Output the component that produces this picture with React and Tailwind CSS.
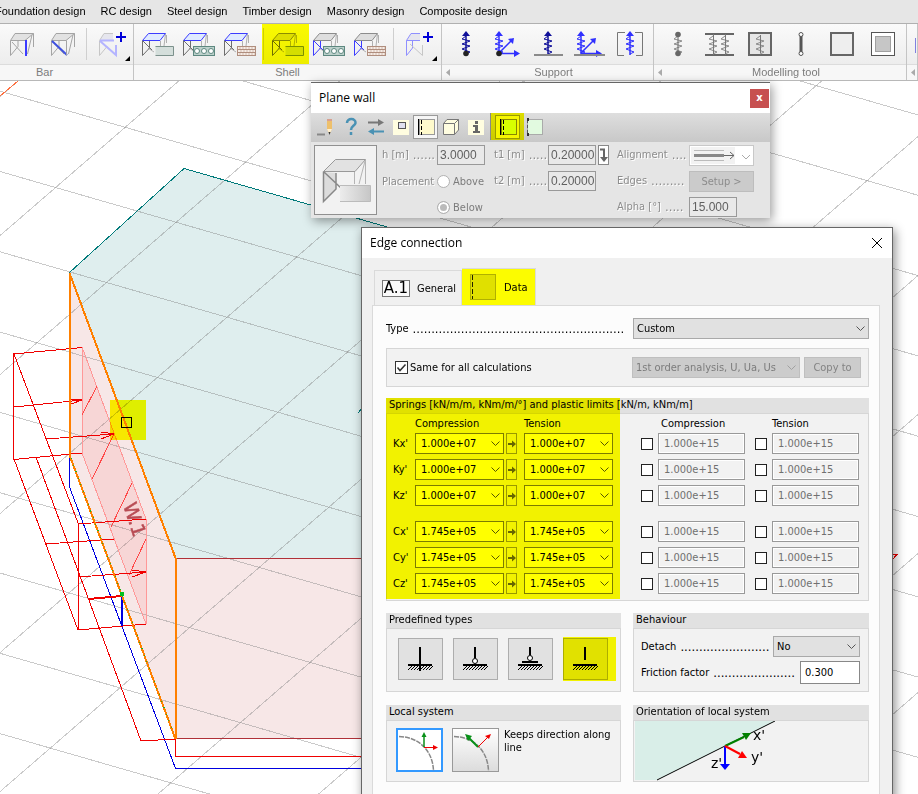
import { useState } from "react";

const ICON = { width: 40, height: 36, viewBox: "0 0 40 36", fill: "none" };

/* Yellow marker laid over a control */
function Marker({ className = "inset-0" }) {
  return <span className={`absolute ${className} bg-[#ffff00] mix-blend-multiply pointer-events-none`} />;
}

/* ---------- ribbon icons ---------- */

function BarIcon({ diagonal }) {
  return (
    <svg {...ICON} aria-hidden="true">
      <path d="M8.500 14.500L13 7.500H31.500L23 14.500Z" fill="#e2e2e2" />
      <path d="M8.500 29.500V14.500L13 7.500H31.500L23 14.500H8.500M8.500 29.500L16 20.500V14.500M10 16L21 28M31.500 7.500V21M30 9L25.500 28" stroke="#a4a4a4" />
      {diagonal ? (
        <path d="M9 15L24 29" stroke="#3f51e0" strokeWidth="2" />
      ) : (
        <path d="M24 14V30" stroke="#3c3cff" strokeWidth="2" />
      )}
      {diagonal && <path d="M23.500 14.500V29.500" stroke="#a4a4a4" />}
    </svg>
  );
}

function AddIcon({ shell }) {
  return (
    <svg {...ICON} aria-hidden="true">
      <path d="M8.500 14.500L13 7.500H22V14.500Z" fill="#e6e6ee" />
      {shell ? (
        <>
          <path d="M8.500 29.500V14.500L13 7.500H22M8.500 14.500H22M8.500 29.500L14.500 22V15" stroke="#8f8fff" />
          <path d="M12 18L24.500 29.500V19" stroke="#c6c6c6" />
        </>
      ) : (
        <>
          <path d="M8.500 29.500V14.500L13 7.500H22M8.500 29.500L16 20.500" stroke="#c6c6c6" />
          <path d="M9 14.500H23M9 15L25 29V19" stroke="#b4b4ff" strokeWidth="2" />
        </>
      )}
      <path d="M25 11H35M30 6V16" stroke="#0000d8" strokeWidth="2" />
      <path d="M39 30V35H34Z" fill="#000" />
    </svg>
  );
}

function ShellIcon({ wall, slab }) {
  const roof = wall ? "#8c8c8c" : "#3c3cff";
  const side = wall === "blue" ? "#3c3cff" : "#6e6e6e";
  return (
    <svg {...ICON} aria-hidden="true">
      <path d="M4.500 14.500L10.500 7.500H27.500L22 14.500Z" fill={wall ? "#dedede" : "#dfeaff"} stroke={roof} />
      <path d="M22.500 15V20M27.500 8L26 20M28.500 9V17M10 22L16 26" stroke="#b0b0b0" />
      <path d="M4.500 14.500V29.500L11.500 22V15M5 15L14 24" stroke={side} />
      {slab === "plain" && <path d="M17.500 20.500H35.500V29.500H17.500" fill="#d4dedb" stroke="#7c918c" />}
      {slab === "holes" && (
        <g stroke="#5d8880">
          <rect x="14.500" y="20.500" width="21" height="9" fill="#bcd0cb" />
          <circle cx="18" cy="25" r="2.500" fill="#fff" />
          <circle cx="25" cy="25" r="2.500" fill="#fff" />
          <circle cx="32" cy="25" r="2.500" fill="#fff" />
        </g>
      )}
      {slab === "brick" && (
        <g stroke="#b08e7e">
          <rect x="17.500" y="20.500" width="18" height="9" fill="#f6ece6" />
          <path d="M18 23.500H35M18 26.500H35" />
          <path d="M19 22H35M20 25H35M19 28H35" strokeDasharray="2 1" strokeOpacity="0.5" />
        </g>
      )}
    </svg>
  );
}

const SPRING = "M20 10L16 13L24 15L16 18L24 20L16 23L24 26L20 28";

function SupportIcon({ ground, axes, bracket }) {
  const color = axes || bracket ? "#3030ff" : "#10109a";
  return (
    <svg {...ICON} aria-hidden="true">
      {bracket && <path d="M15 6.500H7.500V29.500H14M25 6.500H32.500V29.500H26" stroke="#777" />}
      <g transform={`translate(${axes ? -8 : 0})`}>
        <path d={SPRING} stroke={color} />
        <path d="M20 8V29" stroke={color} strokeWidth="1.500" />
        <path d="M20 5L24 10H16Z" fill={color} />
      </g>
      {axes && (
        <>
          <path d="M12 27L25 14M12 27.500H31" stroke={color} strokeWidth="1.500" />
          <path d="M27 12L26 18L21 13ZM33 27.500L27 24V31Z" fill={color} />
        </>
      )}
      {ground ? (
        <path d={axes ? "M5 29H36" : "M6 29H35"} stroke="#8a8a8a" strokeWidth="2" />
      ) : (
        !bracket && <circle cx={axes ? 12 : 20} cy="27.500" r="2.800" fill="#222" />
      )}
    </svg>
  );
}

function ModelIcon({ kind }) {
  return (
    <svg {...ICON} aria-hidden="true">
      {kind === "point" && (
        <>
          <path d={SPRING} stroke="#8c8c8c" />
          <path d="M20 8V28" stroke="#666" />
          <circle cx="20" cy="8.500" r="2.800" fill="#666" />
          <circle cx="20" cy="27.500" r="2.800" fill="#666" />
        </>
      )}
      {kind === "line" && (
        <>
          <path d="M6 8H35M6 29H35" stroke="#666" strokeWidth="2" />
          <g stroke="#8c8c8c">
            <path d={SPRING} transform="translate(-6)" />
            <path d={SPRING} transform="translate(6)" />
            <path d="M14.500 8V29M26.500 8V29" stroke="#777" />
          </g>
        </>
      )}
      {kind === "surface" && (
        <>
          <rect x="9" y="7" width="22" height="22" fill="#e6e6e6" stroke="#666" strokeWidth="2" />
          <path d={SPRING} stroke="#8c8c8c" />
          <path d="M20.500 9V27" stroke="#777" />
        </>
      )}
      {kind === "bar" && (
        <>
          <path d="M20 9V27" stroke="#555" strokeWidth="3" />
          <circle cx="20" cy="8.500" r="2" fill="#fff" stroke="#555" />
          <circle cx="20" cy="27.500" r="2" fill="#fff" stroke="#555" />
        </>
      )}
      {kind === "frame" && <rect x="9" y="7" width="22" height="22" fill="#eee" stroke="#666" strokeWidth="2" />}
      {kind === "cover" && (
        <>
          <rect x="8.500" y="6.500" width="23" height="23" fill="#fff" stroke="#555" />
          <rect x="12.500" y="10.500" width="15" height="15" fill="#c6c6c6" stroke="#a0a0a0" />
        </>
      )}
    </svg>
  );
}

/* ---------- ribbon ---------- */

function Tool({ label, children }) {
  return (
    <button aria-label={label} className="w-[41px] h-10 shrink-0 flex items-center justify-center">
      {children}
    </button>
  );
}

function Divider() {
  return <span className="w-px h-8 mx-[3px] shrink-0 bg-[#cfcfcf]" />;
}

function Group({ title, arrow, className, inner = "pl-[3px]", caption = "", children }) {
  return (
    <section className={`flex flex-col border-r border-[#c4c4c4] ${className}`}>
      <div className={`h-10 flex items-center overflow-hidden bg-gradient-to-b from-[#fafafa] to-[#ededed] ${inner}`}>{children}</div>
      <div className={`h-4 flex items-center border-t border-[#dcdcdc] bg-[#f7f7f7] text-[11px] text-[#7c7c7c] ${caption}`}>
        {arrow && (
          <svg width="12" height="9" aria-hidden="true"><path d="M8 1V8L4 4.500Z" fill="#aaa" /></svg>
        )}
        <span className="flex-1 text-center">{title}</span>
      </div>
    </section>
  );
}

function Ribbon() {
  const menus = ["RC design", "Steel design", "Timber design", "Masonry design", "Composite design"];
  return (
    <header className="relative font-['Liberation_Sans',sans-serif]">
      <nav className="h-6 flex items-center gap-[15px] bg-[#e6e6e6] border-b border-[#b0b0b0] text-[11px] whitespace-nowrap text-black">
        <button className="-ml-[5px]">Foundation design</button>
        {menus.map((m) => (
          <button key={m}>{m}</button>
        ))}
      </nav>
      <div className="flex border-b border-[#b8b8b8]">
        <Group title="Bar" className="w-[134px] shrink-0" inner="pl-px" caption="pr-11">
          <Tool label="Column"><BarIcon /></Tool>
          <Tool label="Brace"><BarIcon diagonal /></Tool>
          <Divider />
          <Tool label="More bars"><AddIcon /></Tool>
        </Group>
        <Group title="Shell" className="w-[308px] shrink-0">
          <Tool label="Plane plate"><ShellIcon slab="plain" /></Tool>
          <Tool label="Profiled plate"><ShellIcon slab="holes" /></Tool>
          <Tool label="Timber plate"><ShellIcon slab="brick" /></Tool>
          <div className="relative flex items-center">
            <Divider />
            <Tool label="Plane wall"><ShellIcon wall="gray" slab="plain" /></Tool>
            <Marker className="inset-y-0 left-0.5 -right-px" />
          </div>
          <Tool label="Profiled wall"><ShellIcon wall="blue" slab="holes" /></Tool>
          <Tool label="Timber wall"><ShellIcon wall="blue" slab="brick" /></Tool>
          <Divider />
          <Tool label="More shells"><AddIcon shell /></Tool>
        </Group>
        <Group title="Support" arrow className="w-[212px] shrink-0">
          <Tool label="Point support"><SupportIcon /></Tool>
          <Tool label="Point support group"><SupportIcon axes /></Tool>
          <Tool label="Line support"><SupportIcon ground /></Tool>
          <Tool label="Line support group"><SupportIcon ground axes /></Tool>
          <Tool label="Surface support"><SupportIcon bracket /></Tool>
        </Group>
        <Group title="Modelling tool" arrow className="w-[253px] shrink-0">
          {["point", "line", "surface", "bar", "frame", "cover"].map((k) => (
            <Tool key={k} label={k}><ModelIcon kind={k} /></Tool>
          ))}
        </Group>
        <Group arrow className="flex-1 min-w-0" inner="pl-2">
          <svg width="4" height="18" aria-hidden="true"><path d="M0.500 18V3M2 0.500H4" stroke="#8080e0" /></svg>
        </Group>
      </div>
    </header>
  );
}

/* ---------- 3D view ---------- */

function Scene() {
  const falling = Array.from({ length: 14 }, (_, k) => -230 + k * 80.3);
  const rising = Array.from({ length: 13 }, (_, k) => 96.6 + k * 139);
  return (
    <svg className="absolute inset-0 w-full h-full" aria-label="Model view" fill="none" shapeRendering="crispEdges">
      <path d="M69 273L184 168L700 317L700 558H175Z" fill="#dfeeee" />
      <path d="M69 273L175 558V739L69 455Z" fill="#f7e7e7" />
      <path d="M175 558H700V739H175Z" fill="#f7e7e7" />
      <g stroke="#808080" strokeOpacity="0.42">
        {falling.map((y) => <path key={y} d={`M0 ${y}l1200 346`} />)}
        {rising.map((y) => <path key={y} d={`M0 ${y}l1200 -1038`} />)}
      </g>
      <path d="M0 96L18 81" stroke="#ff7040" />
      <path d="M69 273L184 168.500L700 317M358 413L363 407" stroke="#007a7a" />
      <path d="M175 558.500H700M175 738.500H700" stroke="#b03038" />
      <path d="M69.500 455V487L175.500 768.500H700" stroke="#0000e0" />
      <path d="M122 597V626" stroke="#0000e0" strokeWidth="2" />
      <path d="M82 347L146 519V624L82 453Z" fill="#ff3030" fillOpacity="0.09" stroke="#ff9898" />
      <path d="M97 386L82 415M114 434L92 479M132 483L111 527M146 539L129 575" stroke="#ff4848" />
      <g stroke="#f00000">
        <path d="M82 347.500L13.500 354V459.500L82 453M14 354L78 523V630L146 624M14 459L78 630M36 457L141 741L175 739M78 524L146 519" />
        <path d="M14 407L82 400M46 439L114 434M46 544L114 539M78 577L146 572M175.500 739V756.500H700" />
        <path d="M82 400l-11 -1M82 400l-11 4M114 434l-13 -2M114 434l-13 5M114 539l-12 0.500M146 572l-14 -2M146 572l-14 5" />
        <path d="M88 599L122 596" strokeWidth="2" />
        <path d="M890 554.500H897L891 561" />
      </g>
      <path d="M69.500 273V455L175.500 739V558L69.500 273" stroke="#ff8000" strokeWidth="2" />
      <path d="M71 458L175 737" stroke="#20b020" strokeDasharray="1 6" />
      <path d="M120 592h4v4h-4z" fill="#00c020" />
      <text x="123" y="505" transform="rotate(72 123 505)" fill="#b84c54" stroke="#b84c54" strokeWidth="0.500" fontSize="19" fontFamily="DejaVu Sans, sans-serif">W.1</text>
      <rect x="110" y="400" width="36" height="40" fill="#ffff00" className="mix-blend-multiply" />
      <rect x="121.500" y="417.500" width="10" height="10" stroke="#000" />
    </svg>
  );
}

/* ---------- form parts ---------- */

function Dots({ n }) {
  return (
    <span aria-hidden="true" className="min-w-0 whitespace-nowrap text-[13px] leading-[14px]">
      {".".repeat(n)}
    </span>
  );
}

function Combo({ label, value, className, chevron = "#555", disabled }) {
  return (
    <div className="relative">
      <select
        aria-label={label}
        disabled={disabled}
        className={`block appearance-none w-full h-[21px] rounded-none border outline-none ${className}`}
      >
        <option>{value}</option>
      </select>
      <svg className="absolute right-1 top-2 pointer-events-none" width="9" height="6" fill="none" aria-hidden="true">
        <path d="M0.500 0.500L4.500 4.500L8.500 0.500" stroke={chevron} />
      </svg>
    </div>
  );
}

function Panel({ title, className = "", body = "", children }) {
  return (
    <section className={className}>
      <h3 className="h-[15px] leading-[14px] pl-[3px] bg-[#e1e1e1] whitespace-nowrap">{title}</h3>
      <div className={`border border-[#d6d6d6] bg-[#f2f2f2] ${body}`}>{children}</div>
    </section>
  );
}

/* ---------- Plane wall window ---------- */

function Strip({ label, active, children }) {
  return (
    <button
      aria-label={label}
      className={`w-[25px] h-6 flex items-center justify-center border ${active ? "border-[#9a9a9a] bg-[#f6f6f6]" : "border-transparent"}`}
    >
      <svg width="20" height="20" className="shrink-0" fill="none" aria-hidden="true">{children}</svg>
    </button>
  );
}

function PlaneWall() {
  const input = "block w-full h-5 pl-0.5 pb-px border border-[#999] bg-[#e9e9e9] text-xs text-[#606060] leading-none font-['Liberation_Sans',sans-serif]";
  const etched = "[text-shadow:1px_1px_0_#fff]";
  return (
    <div className="absolute left-[311px] top-[82px] w-[459px] border-t border-[#666] bg-[#e5e5e5] text-[#8c8c8c] shadow-[2px_3px_10px_rgba(0,0,0,0.4)]">
      <div className="h-[30px] pl-2 pr-px flex items-center justify-between bg-white">
        <h2 className="font-['Open_Sans',sans-serif] text-xs text-black">Plane wall</h2>
        <button aria-label="Close" className="w-[19px] h-[19px] bg-[#c75050] text-white text-[10px] leading-none font-bold font-['DejaVu_Sans',sans-serif]">x</button>
      </div>
      <div className="h-[29px] pl-0.5 pb-0.5 flex items-center bg-gradient-to-b from-[#dedede] to-[#c8c8c8]">
        <Strip label="Default settings">
          <path d="M1 17.500H9" stroke="#888" strokeWidth="2" />
          <path d="M11 3h5v9l-2.500 5L11 12Z" fill="#eec06c" />
          <path d="M11 2h5v2h-5z" fill="#d8a090" />
          <path d="M11 12h5l-2.500 5z" fill="#fff0d0" />
          <path d="M12.500 15l1 3l1 -3z" fill="#333" />
        </Strip>
        <Strip label="Help"><path d="M6 6C6 0.500 15 1 14.500 6C14 9 10 9 10 13M10 15V18" stroke="#4a92b4" strokeWidth="2.500" /></Strip>
        <Strip label="Swap">
          <path d="M2 5.500H13" stroke="#777" strokeWidth="2" />
          <path d="M18 5.500L12 2V9Z" fill="#777" />
          <path d="M2 14.500L8 11V18ZM8 13.500H18V15.500H8Z" fill="#4a92b4" />
        </Strip>
        <Strip label="Opening">
          <rect x="2" y="3" width="16" height="15" fill="#fffde0" />
          <rect x="7.500" y="5.500" width="7" height="6" fill="#e0e0f0" stroke="#555" />
        </Strip>
        <Strip label="Edge line" active>
          <rect x="3.500" y="2.500" width="15" height="15" fill="#fffacc" stroke="#999" />
          <path d="M2.500 2V18" stroke="#000" />
          <path d="M5.500 3V18" stroke="#000" strokeDasharray="4 2" />
        </Strip>
        <Strip label="Solid">
          <path d="M2.500 6.500L6 2.500H17.500V13L13.500 17.500H2.500Z" fill="#fffde0" stroke="#777" />
          <path d="M2.500 6.500H13.500V17.500M13.500 6.500L17.500 2.500" stroke="#777" />
        </Strip>
        <Strip label="Information">
          <rect x="2" y="3" width="16" height="15" fill="#fffde0" />
          <path d="M9 4h3v3H9zM7 8h5v6h2v2H7v-2h2v-4H7z" fill="#666" />
        </Strip>
        <div className="relative ml-0.5 h-[27px] w-[34px] flex items-center justify-center border-l border-[#888]">
          <Strip label="Edge connection" active>
            <rect x="3.500" y="2.500" width="15" height="15" fill="#d8ffb8" stroke="#888" />
            <path d="M2.500 2V18" stroke="#000" />
            <path d="M5.500 3V18" stroke="#000" strokeDasharray="4 2" />
          </Strip>
          <Marker />
        </div>
        <Strip label="Point connection">
          <rect x="0.500" y="2.500" width="15" height="15" fill="#e2fae0" stroke="#aaa" />
          <path d="M0.500 3V18" stroke="#555" strokeDasharray="3 2" />
          <path d="M0 1h2v3H0zM0 16h2v3H0z" fill="#333" />
        </Strip>
      </div>
      <div className="flex gap-[5px] pl-[3px] pt-[3px] pb-px">
        <div className="w-[63px] h-[70px] shrink-0 border border-[#909090] bg-[#f2f2f2]">
          <svg width="61" height="68" fill="none" aria-hidden="true">
            <defs>
              <linearGradient id="slab"><stop offset="0" stopColor="#ececec" /><stop offset="1" stopColor="#c6c6c6" /></linearGradient>
            </defs>
            <path d="M8.500 25.500L20.500 13.500H50.500L40 25.500Z" fill="#e2e2e2" stroke="#999" />
            <path d="M9 26L21 27V42L9 55Z" fill="#dcdcdc" />
            <path d="M8.500 25.500V55.500L21 43V27M9 26L26 42" stroke="#888" strokeWidth="1.500" />
            <path d="M39.500 26V38M50.500 14V38M50 15L44 38" stroke="#b4b4b4" />
            <path d="M25 39.500H55.500V55.500H25Z" fill="url(#slab)" />
            <path d="M25 39.500H55.500V55.500H25" stroke="#bbb" />
          </svg>
        </div>
        <div className="grid grid-cols-[55px_48px_63px_48px_21px_72px_65px] auto-rows-[20px] gap-y-1.5 items-center">
          <label htmlFor="pw-h" className={`flex gap-1 ${etched}`}>h [m]<Dots n={6} /></label>
          <input id="pw-h" disabled defaultValue="3.0000" className={input} />
          <label htmlFor="pw-t1" className={`flex gap-1 pl-[9px] ${etched}`}>t1 [m]<Dots n={5} /></label>
          <input id="pw-t1" disabled defaultValue="0.20000" className={input} />
          <button aria-label="Copy thickness" className="w-[11px] h-5 ml-0.5 border border-[#888] bg-white">
            <svg width="9" height="18" fill="none" aria-hidden="true">
              <path d="M1 3.500H5V12" stroke="#666" strokeWidth="2" />
              <path d="M1 11H9L5 16Z" fill="#666" />
            </svg>
          </button>
          <span className={`flex gap-1 ${etched}`}>Alignment<Dots n={4} /></span>
          <button aria-label="Alignment" className="h-[21px] pl-px flex items-center gap-1 border border-[#c8c8c8] bg-white">
            <svg width="61" height="17" fill="none" aria-hidden="true">
              <rect x="0" y="0" width="44" height="17" fill="#f2f2f2" />
              <path d="M3 3.500H33M3 13.500H33" stroke="#bbb" />
              <path d="M3 8.500H33" stroke="#888" strokeWidth="3" />
              <path d="M33 8.500H43M39 5L43 8.500L39 12" stroke="#666" />
              <path d="M51 8L55 12L59 8" stroke="#aaa" />
            </svg>
          </button>

          <span className={etched}>Placement</span>
          <label className="flex items-center gap-[3px] text-[#7c7c7c]">
            <input type="radio" name="placement" disabled className="appearance-none w-[13px] h-[13px] shrink-0 rounded-full border border-[#b0b0b0] bg-white" />
            Above
          </label>
          <label htmlFor="pw-t2" className={`flex gap-1 pl-[9px] ${etched}`}>t2 [m]<Dots n={5} /></label>
          <input id="pw-t2" disabled defaultValue="0.20000" className={input} />
          <span />
          <span className={`flex gap-1 ${etched}`}>Edges<Dots n={9} /></span>
          <button disabled className="h-[21px] border border-[#bdbdbd] bg-[#cbcbcb]">Setup &gt;</button>

          <span />
          <label className="flex items-center gap-[3px] text-[#7c7c7c]">
            <input type="radio" name="placement" disabled defaultChecked className="appearance-none w-[13px] h-[13px] shrink-0 rounded-full border border-[#b0b0b0] bg-[#bbb] shadow-[inset_0_0_0_2px_#fff]" />
            Below
          </label>
          <span />
          <span />
          <span />
          <label htmlFor="pw-alpha" className={`flex gap-1 ${etched}`}>Alpha [°]<Dots n={5} /></label>
          <div className="w-12"><input id="pw-alpha" disabled defaultValue="15.000" className={input} /></div>
        </div>
      </div>
    </div>
  );
}

/* ---------- Edge connection window ---------- */

const springs = [
  ["Kx'", "1.000e+07"],
  ["Ky'", "1.000e+07"],
  ["Kz'", "1.000e+07"],
  ["Cx'", "1.745e+05"],
  ["Cy'", "1.745e+05"],
  ["Cz'", "1.745e+05"],
];

function Limit({ name }) {
  const [on, setOn] = useState(false);
  return (
    <div className="flex items-center gap-[5px]">
      <input
        type="checkbox"
        aria-label={`${name} limit`}
        checked={on}
        onChange={(e) => setOn(e.target.checked)}
        className="appearance-none w-3 h-3 shrink-0 border border-[#222] bg-white checked:bg-[#444]"
      />
      <input
        aria-label={`${name} limit value`}
        disabled={!on}
        defaultValue="1.000e+15"
        className="w-[87px] h-[21px] pl-[5px] border border-[#999] bg-[#f2f2f2] text-[#707070] shadow-[inset_0_0_0_1px_#fff]"
      />
    </div>
  );
}

function Springs() {
  const cols = "grid grid-cols-[22px_89px_20px_89px_28px_103px_11px_104px] items-center";
  return (
    <div className="relative mt-[11px]">
      <Panel title="Springs [kN/m/m, kNm/m/°] and plastic limits [kN/m, kNm/m]" body="pl-1.5 pt-[3px] pb-1.5">
        <div className={`${cols} h-4 leading-[14px] items-start whitespace-nowrap`}>
          <span />
          <span>Compression</span>
          <span />
          <span>Tension</span>
          <span />
          <span className="pl-5">Compression</span>
          <span />
          <span className="pl-[17px]">Tension</span>
        </div>
        {springs.map(([name, value], i) => (
          <div key={name} className={`${cols} ${i === 3 ? "mt-[15px]" : i ? "mt-[5px]" : ""}`}>
            <span>{name}</span>
            <Combo label={`${name} compression`} value={value} className="bg-white border-[#7c7c7c] pl-[5px]" />
            <button aria-label="Copy to tension" className="w-[11px] h-[21px] ml-0.5 border border-[#999] flex items-center justify-center">
              <svg width="8" height="8" className="shrink-0" aria-hidden="true"><path d="M0 3h4V0.500L8 4L4 7.500V5H0Z" fill="#666" /></svg>
            </button>
            <Combo label={`${name} tension`} value={value} className="bg-white border-[#7c7c7c] pl-[5px]" />
            <span />
            <Limit name={`${name} compression`} />
            <span />
            <Limit name={`${name} tension`} />
          </div>
        ))}
      </Panel>
      <Marker className="left-0 top-0 bottom-0.5 w-[234px]" />
    </div>
  );
}

function TypeIcon({ kind }) {
  return (
    <svg width="43" height="40" fill="none" stroke="#000" aria-hidden="true">
      <path d="M9 26H33" strokeWidth="2" />
      {[9, 12, 15, 18, 21, 24, 27, 30].map((x) => <path key={x} d={`M${x} 31L${x + 4} 27`} />)}
      {kind === "fixed" && <path d="M21 8V32" strokeWidth="2" />}
      {kind === "hinged" && <><path d="M21 8V19" strokeWidth="2" /><circle cx="21" cy="22" r="2.500" fill="#fff" /></>}
      {kind === "sliding" && <><path d="M21 8V16M13 23H29" strokeWidth="2" /><circle cx="21" cy="19" r="2.500" fill="#fff" /></>}
      {kind === "free" && <path d="M21 8V21" strokeWidth="2" />}
    </svg>
  );
}

function AxisIcon({ rotated }) {
  return (
    <svg width="43" height="41" fill="none" aria-hidden="true">
      <path d="M1 6.500C22 7 35 22 35.500 41" stroke="#888" strokeWidth="1.500" strokeDasharray="5 1" />
      {rotated ? (
        <>
          <path d="M25 17L14 6" stroke="#089018" strokeWidth="2" />
          <path d="M12 4L19 6L15 11Z" fill="#089018" />
          <path d="M25 17L36 6" stroke="#f00000" />
          <path d="M38 4L36 9L32 6Z" fill="#f00000" />
        </>
      ) : (
        <>
          <path d="M26 17V6" stroke="#089018" strokeWidth="1.500" />
          <path d="M26 2L28.500 7H23.500Z" fill="#089018" />
          <path d="M26 17.500H37" stroke="#f00000" />
          <path d="M40 17.500L35 15V20Z" fill="#f00000" />
        </>
      )}
    </svg>
  );
}

function EdgeConnection() {
  const [same, setSame] = useState(true);
  return (
    <div className="absolute left-[361px] top-[227px] w-[532px] border border-[#666] bg-[#f0f0f0] text-black shadow-[2px_3px_10px_rgba(0,0,0,0.45)]">
      <div className="h-[30px] pl-2 pr-[9px] flex items-center justify-between bg-white">
        <h2 className="font-['Open_Sans',sans-serif] text-xs">Edge connection</h2>
        <button aria-label="Close">
          <svg width="12" height="12" fill="none" aria-hidden="true"><path d="M1 1L11 11M11 1L1 11" stroke="#000" /></svg>
        </button>
      </div>

      <div className="px-2.5">
        <div role="tablist" className="pt-2.5 pl-0.5 flex items-end">
          <button role="tab" aria-selected="false" className="h-[35px] w-[88px] pl-[7px] flex items-center gap-[7px] border border-b-0 border-[#dadada]">
            <span className="w-7 h-[17px] border border-[#777] bg-[#fafafa] text-[15px] leading-[15px] text-center font-['DejaVu_Sans',sans-serif]">A.1</span>
            General
          </button>
          <button role="tab" aria-selected="true" className="relative h-[37px] w-[74px] pl-2 flex items-center gap-2 border-t border-r border-[#dadada] bg-[#fcfcfc]">
            <svg width="26" height="26" fill="none" aria-hidden="true">
              <rect x="0.500" y="0.500" width="25" height="25" fill="#e0e0e0" stroke="#b0b0b0" />
              <path d="M2.500 1V25" stroke="#222" strokeDasharray="5 2" />
            </svg>
            Data
            <Marker />
          </button>
        </div>

        <div className="pl-[13px] pr-2.5 pt-3 pb-8 border border-[#dadada] bg-[#fcfcfc] mr-0.5">
          <div className="grid grid-cols-[247px_minmax(0,1fr)] items-center">
            <span className="flex gap-1">Type<Dots n={57} /></span>
            <Combo label="Type" value="Custom" className="bg-[#e1e1e1] border-[#a9a9a9] pl-[3px]" />
          </div>

          <div className="mt-[9px] h-[39px] pl-2 pr-[7px] flex items-center border border-[#d6d6d6] bg-[#f2f2f2]">
            <label className="flex-1 flex items-center gap-0.5">
              <span className="relative w-[13px] h-[13px]">
                <input
                  type="checkbox"
                  checked={same}
                  onChange={(e) => setSame(e.target.checked)}
                  className="appearance-none block w-[13px] h-[13px] border border-[#333] bg-white"
                />
                {same && (
                  <svg className="absolute inset-0 pointer-events-none" width="13" height="13" fill="none" aria-hidden="true">
                    <path d="M2.500 6.500L5 9.500L10.500 3.500" stroke="#333" strokeWidth="1.500" />
                  </svg>
                )}
              </span>
              Same for all calculations
            </label>
            <div className="w-[168px]">
              <Combo label="Calculation" disabled value="1st order analysis, U, Ua, Us" chevron="#a0a0a0" className="bg-[#cccccc] border-[#bfbfbf] text-[#7c7c7c] pl-[3px]" />
            </div>
            <button disabled className="w-[57px] h-[21px] ml-1 border border-[#bfbfbf] bg-[#cccccc] text-[#838383]">Copy to</button>
          </div>

          <Springs />

          <div className="mt-3 grid grid-cols-[235px_minmax(0,1fr)] gap-x-3 gap-y-[13px]">
            <Panel title="Predefined types" body="h-16 pl-[11px] pt-[9px] flex gap-2.5">
              {["fixed", "hinged", "sliding"].map((k) => (
                <button key={k} aria-label={k} className="w-[45px] h-[42px] shrink-0 border border-[#adadad] bg-[#e1e1e1]"><TypeIcon kind={k} /></button>
              ))}
              <div className="relative h-[42px] w-[53px] shrink-0">
                <button aria-label="free" className="w-[45px] h-[42px] border border-[#adadad] bg-[#e1e1e1]"><TypeIcon kind="free" /></button>
                <Marker className="inset-x-0 -inset-y-px" />
              </div>
            </Panel>
            <Panel title="Behaviour" body="h-16 pt-[7px] pl-[7px] pr-2">
              <div className="grid grid-cols-[minmax(0,1fr)_87px] items-center">
                <span className="flex gap-1">Detach<Dots n={24} /></span>
                <Combo label="Detach" value="No" className="bg-[#e1e1e1] border-[#a9a9a9] pl-[3px]" />
              </div>
              <div className="mt-1 grid grid-cols-[minmax(0,1fr)_60px] items-center">
                <label htmlFor="friction" className="flex gap-1 whitespace-nowrap">Friction factor<Dots n={22} /></label>
                <input id="friction" defaultValue="0.300" className="w-full h-[23px] pl-1 border border-[#888] bg-white" />
              </div>
            </Panel>
            <Panel title="Local system" body="h-[62px] pl-[9px] pt-[7px] flex gap-[9px]">
              <button aria-label="Constant direction" className="w-[47px] h-[44px] shrink-0 border-2 border-[#3399ff] bg-white"><AxisIcon /></button>
              <button aria-label="Along line" className="w-[47px] h-[44px] shrink-0 border border-[#999] bg-gradient-to-b from-white to-[#dcdcdc]"><AxisIcon rotated /></button>
              <p className="-ml-1 leading-[13px]">Keeps direction along line</p>
            </Panel>
            <Panel title="Orientation of local system" body="h-[62px] pl-px">
              <svg width="230" height="60" fill="none" aria-label="Local axes">
                <path d="M0 0H140L22 59H0Z" fill="#d9eee8" />
                <path d="M140 0L22 59" stroke="#000" />
                <path d="M90 25V43" stroke="#0000ff" strokeWidth="2" />
                <path d="M90 49L85 43H95Z" fill="#0000ff" />
                <path d="M90 25L109 16" stroke="#008000" strokeWidth="2" />
                <path d="M116 12L111 19L107 12Z" fill="#008000" />
                <path d="M90 25L105 33" stroke="#ff0000" strokeWidth="2" />
                <path d="M112 37L103 37L107 30Z" fill="#ff0000" />
                <g fill="#000" fontSize="14" fontFamily="DejaVu Sans, sans-serif">
                  <text x="118" y="19">x'</text>
                  <text x="116" y="41">y'</text>
                  <text x="76" y="47">z'</text>
                </g>
              </svg>
            </Panel>
          </div>
        </div>
      </div>
    </div>
  );
}

export default function App() {
  return (
    <main className="relative min-h-screen h-screen overflow-hidden bg-white text-[11px] leading-[13px] font-['DejaVu_Sans_Condensed','DejaVu_Sans',sans-serif]">
      <Scene />
      <Ribbon />
      <PlaneWall />
      <EdgeConnection />
    </main>
  );
}
